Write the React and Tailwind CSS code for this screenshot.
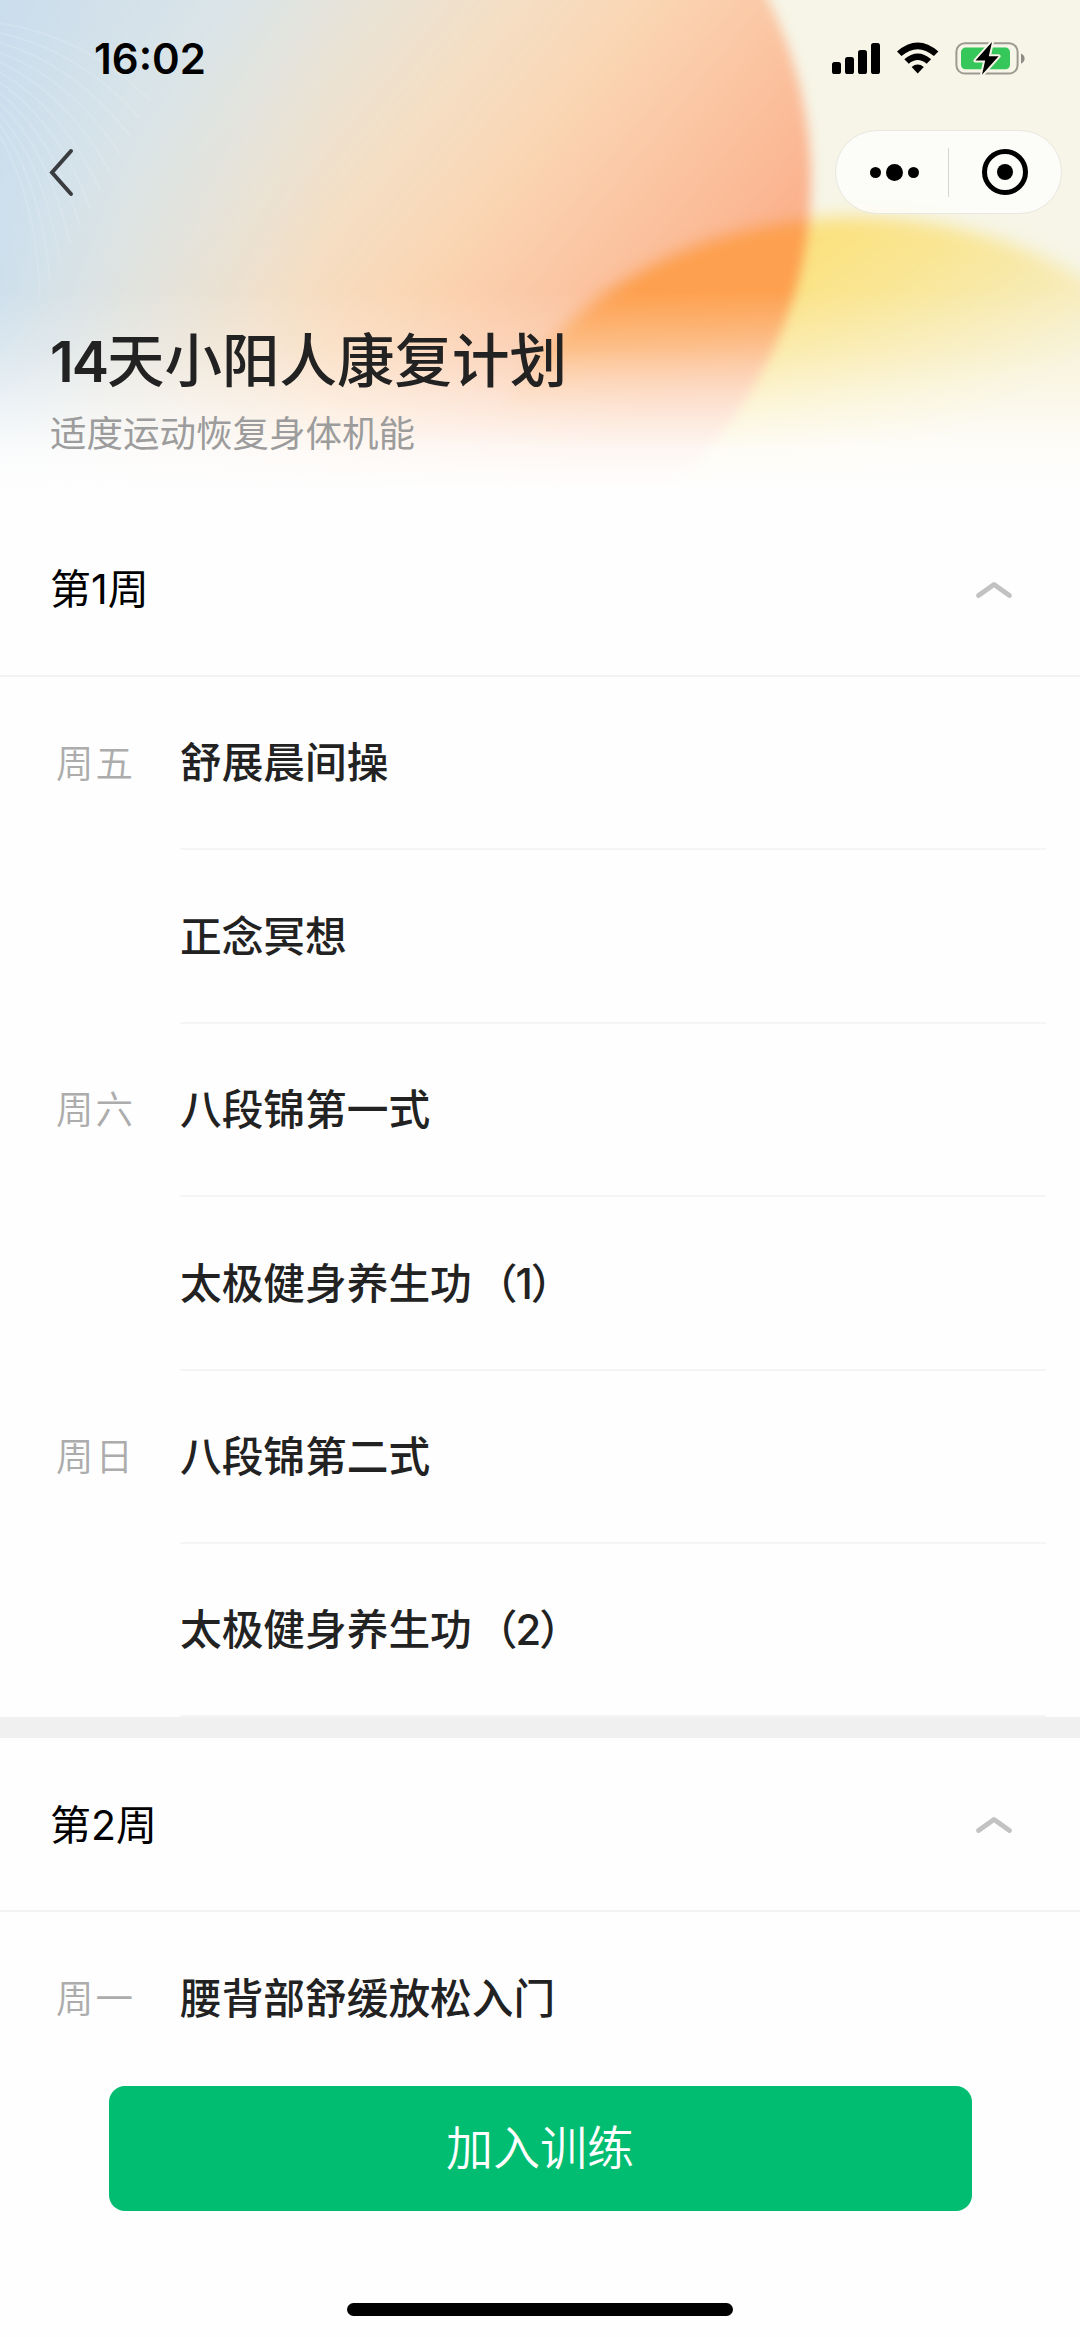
import React from 'react';

const WEEKS = [
  {
    title: '第1周',
    items: [
      { day: '周五', name: '舒展晨间操' },
      { day: '', name: '正念冥想' },
      { day: '周六', name: '八段锦第一式' },
      { day: '', name: '太极健身养生功', part: '（1）' },
      { day: '周日', name: '八段锦第二式' },
      { day: '', name: '太极健身养生功', part: '（2）' }
    ]
  },
  {
    title: '第2周',
    items: [{ day: '周一', name: '腰背部舒缓放松入门' }]
  }
];

// Fine light strands in the top left corner of the artwork
const STRANDS = [0, 1, 2, 3, 4, 5, 6, 7, 8, 9, 10, 11];

const HeroArtwork = () => (
  <svg className="absolute inset-0 h-[500px] w-[1080px]" viewBox="0 0 1080 500" aria-hidden="true">
    <defs>
      <linearGradient id="peach" gradientUnits="userSpaceOnUse" x1="80" y1="-60" x2="640" y2="400">
        <stop offset="0" stopColor="#cbdcea" />
        <stop offset="0.2" stopColor="#dae4e8" />
        <stop offset="0.36" stopColor="#e8e3d7" />
        <stop offset="0.52" stopColor="#f5dfc4" />
        <stop offset="0.66" stopColor="#fad6b4" />
        <stop offset="0.84" stopColor="#fbc3a0" />
        <stop offset="1" stopColor="#fbb28e" />
      </linearGradient>
      <linearGradient id="sky" gradientUnits="userSpaceOnUse" x1="0" y1="0" x2="330" y2="0">
        <stop offset="0" stopColor="#cadeee" stopOpacity="0.75" />
        <stop offset="0.4" stopColor="#d5e3ea" stopOpacity="0.4" />
        <stop offset="1" stopColor="#dde6ea" stopOpacity="0" />
      </linearGradient>
      <linearGradient id="sun" gradientUnits="userSpaceOnUse" x1="820" y1="240" x2="960" y2="440">
        <stop offset="0" stopColor="#fbe180" />
        <stop offset="0.35" stopColor="#f9e697" />
        <stop offset="1" stopColor="#f6efcf" />
      </linearGradient>
      <linearGradient id="overlap" gradientUnits="userSpaceOnUse" x1="660" y1="300" x2="670" y2="430">
        <stop offset="0" stopColor="#fda04f" />
        <stop offset="0.3" stopColor="#fda658" stopOpacity="0.9" />
        <stop offset="1" stopColor="#fbc79a" stopOpacity="0.15" />
      </linearGradient>
      <linearGradient id="fade" x1="0" y1="0" x2="0" y2="1">
        <stop offset="0.58" stopColor="#fefefe" stopOpacity="0" />
        <stop offset="0.7" stopColor="#fefefe" stopOpacity="0.25" />
        <stop offset="0.8" stopColor="#fefefe" stopOpacity="0.58" />
        <stop offset="0.9" stopColor="#fefefe" stopOpacity="0.9" />
        <stop offset="0.98" stopColor="#fefefe" />
      </linearGradient>
      <filter id="soft" x="-10%" y="-10%" width="120%" height="120%">
        <feGaussianBlur stdDeviation="6" />
      </filter>
      <filter id="haze" x="-20%" y="-20%" width="140%" height="140%">
        <feGaussianBlur stdDeviation="9" />
      </filter>
      <clipPath id="ball">
        <ellipse cx="370" cy="180" rx="441" ry="420" />
      </clipPath>
    </defs>
    <rect width="1080" height="500" fill="#f6f5e7" />
    <ellipse cx="855" cy="517" rx="376" ry="300" fill="url(#sun)" filter="url(#haze)" />
    <g filter="url(#soft)">
      <rect x="-40" y="-40" width="300" height="600" fill="url(#peach)" />
      <ellipse cx="370" cy="180" rx="441" ry="420" fill="url(#peach)" />
      <g clipPath="url(#ball)">
        <ellipse cx="855" cy="517" rx="376" ry="300" fill="url(#overlap)" filter="url(#soft)" />
      </g>
    </g>
    <rect width="600" height="500" fill="url(#sky)" />
    <g fill="none" stroke="#ffffff" strokeOpacity="0.13" strokeWidth="2">
      {STRANDS.map((n) => (
        <path key={n} d={`M-10 ${22 + n * 9} Q${80 - n * 4} ${32 + n * 14} ${150 - n * 10} ${100 + n * 18}`} />
      ))}
    </g>
    <rect width="1080" height="500" fill="url(#fade)" />
  </svg>
);

const StatusIcons = () => (
  <svg className="h-[36px] w-[196px]" viewBox="830 40 196 36" aria-hidden="true">
    <rect x="832" y="62" width="9" height="12" rx="2.6" />
    <rect x="845" y="57" width="9" height="17" rx="2.6" />
    <rect x="858" y="50" width="9" height="24" rx="2.6" />
    <rect x="871" y="43" width="9" height="31" rx="2.6" />
    {/* Wifi */}
    <path d="M897 51.6Q917.7 33.6 938.4 51.6L933.9 56.1Q917.7 42.2 901.5 56.1Z" />
    <path d="M904.3 59.2Q917.7 47.8 931.1 59.2L926.6 63.7Q917.7 56.2 908.8 63.7Z" />
    <path d="M911.6 67Q917.7 62.2 923.8 67L917.7 73.4Z" />
    {/* Battery */}
    <rect x="956.4" y="43.2" width="61.2" height="30.4" rx="8.5" fill="none" stroke="#9c9b91" strokeWidth="2" />
    <rect x="961" y="47.6" width="49" height="21.6" rx="4.5" fill="#35c759" />
    <path d="M1021 53.5Q1024.6 55 1024.6 58.6Q1024.6 62.2 1021 63.7Z" fill="#8f8e86" />
    <path
      d="M992 42L975.5 60.6H985.2L982 74.8L998.6 56.2H988.8Z"
      stroke="#f6f5e7"
      strokeWidth="4"
      strokeLinejoin="round"
      paintOrder="stroke"
    />
  </svg>
);

const BackIcon = () => (
  <svg className="h-[50px] w-[30px]" viewBox="0 0 30 50" fill="none" stroke="#3a3c40" strokeWidth="4" strokeLinecap="round">
    <path d="M23 4L4 25.5L23 47" />
  </svg>
);

const ChevronUp = () => (
  <svg className="h-[18px] w-[38px]" viewBox="0 0 38 18" fill="none" stroke="#c2c2c2" strokeWidth="4.8" strokeLinecap="round" strokeLinejoin="round">
    <path d="M3.5 14.5L19 3.5L34.5 14.5" />
  </svg>
);

const Capsule = () => (
  <div className="flex h-[84px] w-[227px] items-center rounded-full border border-[#e8e8e2] bg-white/70">
    <div className="flex w-[112px] items-center justify-center gap-[5px] pl-[5px]">
      <span className="size-[11px] rounded-full bg-black" />
      <span className="size-[17px] rounded-full bg-black" />
      <span className="size-[11px] rounded-full bg-black" />
    </div>
    <div className="h-[49px] w-px bg-[#d5d5d1]" />
    <div className="flex flex-1 items-center justify-center">
      <span className="flex size-[46px] items-center justify-center rounded-full border-[5.5px] border-black">
        <span className="size-4 rounded-full bg-black" />
      </span>
    </div>
  </div>
);

const Header = () => (
  <header className="relative h-[503px]">
    <HeroArtwork />
    <div className="relative flex h-[116px] items-center justify-between pr-[54px] pl-[94px]">
      <span className="pt-[2px] font-['Inter'] text-[42px] leading-none font-semibold">16:02</span>
      <StatusIcons />
    </div>
    <div className="relative mt-[14px] flex h-[84px] items-center justify-between pr-[18px] pl-[48px]">
      <BackIcon />
      <Capsule />
    </div>
    <div className="relative mt-[105px] pl-[50px]">
      <h1 className="text-[57.5px] leading-[84px] font-medium text-[#222]">
        <span className="font-['Inter'] text-[56px] font-semibold tracking-[-2px]">14</span>天小阳人康复计划
      </h1>
      <p className="mt-[3px] text-[36.5px] leading-[54px] text-[#9c9c9c]">适度运动恢复身体机能</p>
    </div>
  </header>
);

const PlanRow = ({ day, name, part }) => (
  <li className="flex h-[173.4px] pr-[34px] pl-[56px]">
    <span className="flex w-[124px] items-center text-[37.5px] font-[350] tracking-[2px] text-[#acacac]">{day}</span>
    <span className="flex flex-1 items-center border-b-2 border-[#f5f5f5] pt-[2px] text-[41.7px] font-medium text-[#222]">
      {name}
      {part && <span className="ml-[4px] tracking-[-2px]">{part}</span>}
    </span>
  </li>
);

const WeekSection = ({ title, items }) => (
  <section>
    <div className="flex h-[174px] items-center justify-between border-b-2 border-[#f3f3f3] pt-[2px] pr-[67px] pl-[50px]">
      <h2 className="text-[41px] text-black">{title}</h2>
      <ChevronUp />
    </div>
    <ul>
      {items.map((item, index) => (
        <PlanRow key={index} {...item} />
      ))}
    </ul>
  </section>
);

export default function App() {
  return (
    <div className="relative h-[2337px] w-[1080px] overflow-hidden bg-[#fefefe] font-['Inter','Noto_Sans_CJK_SC',sans-serif]">
      <Header />
      <main className="flex flex-col">
        {WEEKS.map((week, index) => (
          <React.Fragment key={week.title}>
            {index > 0 && <div className="h-[21px] bg-[#f0f0f0]" />}
            <WeekSection title={week.title} items={week.items} />
          </React.Fragment>
        ))}
      </main>

      {/* Fixed bottom action */}
      <footer className="absolute inset-x-0 bottom-0 flex h-[255px] flex-col items-center bg-[#fefefe] pt-[4px]">
        <button className="h-[125px] w-[863px] rounded-2xl bg-[#00bd71] text-[47px] font-[350] text-white">加入训练</button>
        <div className="mt-[92px] h-[13px] w-[386px] rounded-full bg-black" />
      </footer>
    </div>
  );
}
